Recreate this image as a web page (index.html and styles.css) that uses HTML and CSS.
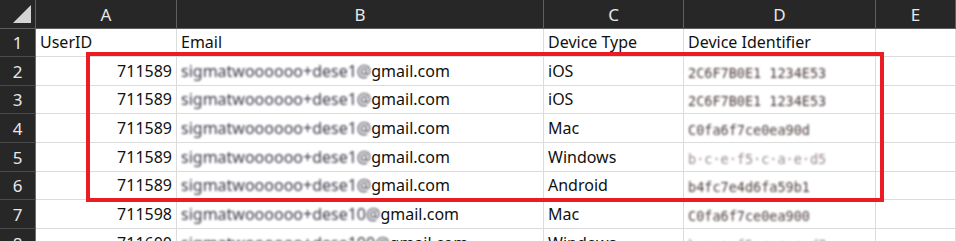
FILE: index.html
```html
<!DOCTYPE html>
<html>
<head>
<meta charset="utf-8">
<link rel="stylesheet" href="styles.css">
</head>
<body>
<div class="sheet">
  <div class="grid">
    <div class="hd corner"><svg width="20" height="20" viewBox="0 0 20 20"><polygon points="18,1 18,19 0,19" fill="#d4d4d4"/></svg></div>
    <div class="hd col">A</div>
    <div class="hd col">B</div>
    <div class="hd col">C</div>
    <div class="hd col">D</div>
    <div class="hd col">E</div>

    <div class="hd row">1</div>
    <div class="c">UserID</div>
    <div class="c">Email</div>
    <div class="c">Device Type</div>
    <div class="c">Device Identifier</div>
    <div class="c"></div>

    <div class="hd row">2</div>
    <div class="c num">711589</div>
    <div class="c"><span class="blur">sigmatwoooooo+dese1@</span>gmail.com</div>
    <div class="c">iOS</div>
    <div class="c"><span class="id">2C6F7B0E1 1234E53</span></div>
    <div class="c"></div>

    <div class="hd row">3</div>
    <div class="c num">711589</div>
    <div class="c"><span class="blur">sigmatwoooooo+dese1@</span>gmail.com</div>
    <div class="c">iOS</div>
    <div class="c"><span class="id">2C6F7B0E1 1234E53</span></div>
    <div class="c"></div>

    <div class="hd row">4</div>
    <div class="c num">711589</div>
    <div class="c"><span class="blur">sigmatwoooooo+dese1@</span>gmail.com</div>
    <div class="c">Mac</div>
    <div class="c"><span class="id">C0fa6f7ce0ea90d</span></div>
    <div class="c"></div>

    <div class="hd row">5</div>
    <div class="c num">711589</div>
    <div class="c"><span class="blur">sigmatwoooooo+dese1@</span>gmail.com</div>
    <div class="c">Windows</div>
    <div class="c"><span class="id light">b·c·e·f5·c·a·e·d5</span></div>
    <div class="c"></div>

    <div class="hd row">6</div>
    <div class="c num">711589</div>
    <div class="c"><span class="blur">sigmatwoooooo+dese1@</span>gmail.com</div>
    <div class="c">Android</div>
    <div class="c"><span class="id">b4fc7e4d6fa59b1</span></div>
    <div class="c"></div>

    <div class="hd row">7</div>
    <div class="c num">711598</div>
    <div class="c"><span class="blur">sigmatwoooooo+dese10@</span>gmail.com</div>
    <div class="c">Mac</div>
    <div class="c"><span class="id">C0fa6f7ce0ea900</span></div>
    <div class="c"></div>

    <div class="hd row">8</div>
    <div class="c num">711600</div>
    <div class="c"><span class="blur">sigmatwoooooo+dese100@</span>gmail.com</div>
    <div class="c">Windows</div>
    <div class="c"><span class="id light">b·c·e·f5·c·a·e·d7</span></div>
    <div class="c"></div>
  </div>
  <div class="mark"></div>
</div>
</body>
</html>
```
FILE: styles.css
```css
html, body {
  margin: 0;
  padding: 0;
  background: #ffffff;
}
.sheet {
  position: relative;
  width: 956px;
  height: 241px;
  overflow: hidden;
  font-family: "Noto Sans", "Open Sans", sans-serif;
  font-size: 16px;
  color: #111111;
}
.grid {
  display: grid;
  grid-template-columns: 36px 141px 367px 140px 192px 80px;
  grid-template-rows: 29px 28px 29px 28px 29px 29px 28px 29px 29px;
}
.hd {
  background: #272727;
  color: #e8e8e8;
  box-sizing: border-box;
  border-right: 1px solid #5e5e5e;
  border-bottom: 1px solid #5e5e5e;
  display: flex;
  align-items: center;
  justify-content: center;
  font-size: 17px;
}
.corner {
  justify-content: flex-end;
  align-items: flex-start;
  padding: 4px 2px 0 0;
}
.col {
  padding-top: 1px;
}
.row {
  border-bottom-color: #4a4a4a;
  border-right-color: #6e6e6e;
}
.c {
  box-sizing: border-box;
  border-right: 1px solid #dcdcdc;
  border-bottom: 1px solid #dcdcdc;
  display: flex;
  align-items: flex-end;
  padding: 0 4px 3px 4px;
  white-space: nowrap;
  overflow: visible;
}
.num {
  justify-content: flex-end;
}
.blur {
  filter: blur(0.8px);
  color: #3a3a4a;
}
.id {
  font-family: "DejaVu Sans Mono", monospace;
  font-size: 13.5px;
  filter: blur(1.3px);
  color: #4a3a3a;
  padding-bottom: 1px;
}
.id.light {
  color: #9a8a8a;
}
.mark {
  position: absolute;
  left: 86px;
  top: 52px;
  width: 798px;
  height: 150px;
  box-sizing: border-box;
  border: 4px solid #ec1c24;
}
```
